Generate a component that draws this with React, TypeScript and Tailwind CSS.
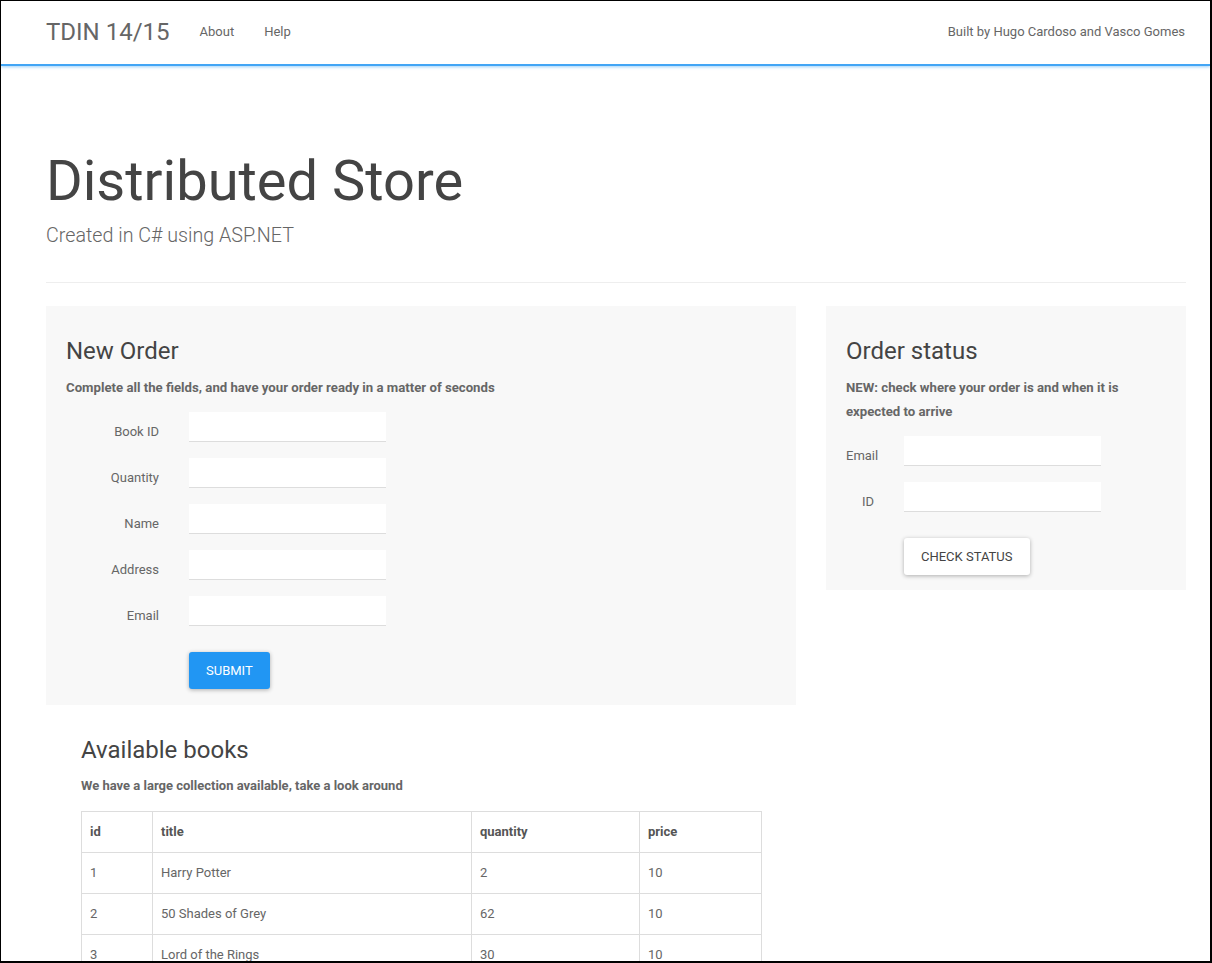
import React from 'react';

const books = [
    { id: 1, title: 'Harry Potter', quantity: 2, price: 10 },
    { id: 2, title: '50 Shades of Grey', quantity: 62, price: 10 },
    { id: 3, title: 'Lord of the Rings', quantity: 30, price: 10 },
];

const Field: React.FC<{ label: string; labelWidth: string }> = ({ label, labelWidth }) => {
    return (
        <div className="flex items-start h-[30px] mb-[16px]">
            <label className={`${labelWidth} mr-[30px] pt-[8px] leading-[24px] text-right whitespace-nowrap text-[13px] text-[#666]`}>
                {label}
            </label>
            <input
                type="text"
                className="w-[197px] h-[30px] bg-white border-b border-[#ddd] outline-none px-2 text-[13px]"
            />
        </div>
    );
};

const App: React.FC = () => {
    return (
        <div
            className="w-[1212px] h-[963px] overflow-hidden bg-white border-l border-t border-r-2 border-b-2 border-black"
            style={{ fontFamily: 'Roboto, "Helvetica Neue", Arial, sans-serif' }}
        >
            <nav className="h-[65px] bg-white border-b-[2px] border-[#42a5f5] shadow-[0_1px_3px_rgba(33,150,243,0.45)] flex items-center pb-[1px] pl-[45px] pr-[25px]">
                <span className="text-[24px] leading-[30px] text-[#666] mr-[30px]">TDIN 14/15</span>
                <a className="text-[13px] text-[#666] mr-[30px]">About</a>
                <a className="text-[13px] text-[#666]">Help</a>
                <span className="ml-auto text-[13px] text-[#666]">Built by Hugo Cardoso and Vasco Gomes</span>
            </nav>

            <div className="pl-[45px] pr-[24px]">
                <div className="pt-[84px] pb-[35px] border-b border-[#eee]">
                    <h1 className="text-[56px] leading-[62px] text-[#444] font-normal">Distributed Store</h1>
                    <p className="mt-[12px] mb-[-1px] text-[19.7px] leading-[24px] font-light text-[#666]">Created in C# using ASP.NET</p>
                </div>

                <div className="flex gap-[30px] mt-[23px] items-start">
                    <div className="w-[750px]">
                        <div className="bg-[#f8f8f8] px-[20px] pt-[32px] pb-[16px]">
                            <h3 className="text-[24px] leading-[26px] text-[#444]">New Order</h3>
                            <p className="mt-[12px] mb-[12px] text-[13.2px] leading-[24px] font-bold text-[#666]">
                                Complete all the fields, and have your order ready in a matter of seconds
                            </p>
                            <Field label="Book ID" labelWidth="w-[93px]" />
                            <Field label="Quantity" labelWidth="w-[93px]" />
                            <Field label="Name" labelWidth="w-[93px]" />
                            <Field label="Address" labelWidth="w-[93px]" />
                            <Field label="Email" labelWidth="w-[93px]" />
                            <div className="pl-[123px] pt-[10px]">
                                <button className="h-[37px] px-[17px] rounded-[3px] bg-[#2196f3] text-white text-[13px] uppercase shadow-[0_1px_4px_rgba(0,0,0,0.3)]">
                                    Submit
                                </button>
                            </div>
                        </div>

                        <div className="px-[35px] pt-[32px]">
                            <h3 className="text-[24px] leading-[26px] text-[#444]">Available books</h3>
                            <p className="mt-[11px] mb-[13px] text-[13px] leading-[24px] font-bold text-[#666]">
                                We have a large collection available, take a look around
                            </p>
                            <table className="w-[680px] table-fixed border-collapse text-[13px] leading-[24px] text-[#666]">
                                <colgroup>
                                    <col className="w-[71px]" />
                                    <col className="w-[319px]" />
                                    <col className="w-[168px]" />
                                    <col className="w-[122px]" />
                                </colgroup>
                                <thead>
                                    <tr>
                                        <th className="border border-[#ddd] px-[8px] py-[8px] text-left font-bold text-[#555]">id</th>
                                        <th className="border border-[#ddd] px-[8px] py-[8px] text-left font-bold text-[#555]">title</th>
                                        <th className="border border-[#ddd] px-[8px] py-[8px] text-left font-bold text-[#555]">quantity</th>
                                        <th className="border border-[#ddd] px-[8px] py-[8px] text-left font-bold text-[#555]">price</th>
                                    </tr>
                                </thead>
                                <tbody>
                                    {books.map((b) => (
                                        <tr key={b.id}>
                                            <td className="border border-[#ddd] px-[8px] py-[8px]">{b.id}</td>
                                            <td className="border border-[#ddd] px-[8px] py-[8px]">{b.title}</td>
                                            <td className="border border-[#ddd] px-[8px] py-[8px]">{b.quantity}</td>
                                            <td className="border border-[#ddd] px-[8px] py-[8px]">{b.price}</td>
                                        </tr>
                                    ))}
                                </tbody>
                            </table>
                        </div>
                    </div>

                    <div className="w-[360px] bg-[#f8f8f8] px-[20px] pt-[32px] pb-[15px]">
                        <h3 className="text-[24px] leading-[26px] text-[#444]">Order status</h3>
                        <p className="mt-[12px] mb-[12px] text-[13.2px] leading-[24px] font-bold text-[#666]">
                            NEW: check where your order is and when it is expected to arrive
                        </p>
                        <Field label="Email" labelWidth="w-[28px]" />
                        <Field label="ID" labelWidth="w-[28px]" />
                        <div className="pl-[58px] pt-[10px]">
                            <button className="h-[37px] px-[17px] rounded-[3px] bg-white text-[#444] text-[13px] uppercase shadow-[0_1px_4px_rgba(0,0,0,0.3)]">
                                Check status
                            </button>
                        </div>
                    </div>
                </div>
            </div>
        </div>
    );
};

export default App;
